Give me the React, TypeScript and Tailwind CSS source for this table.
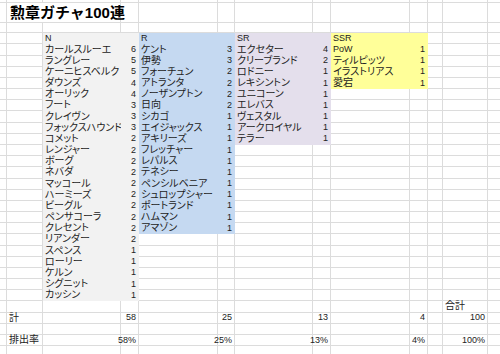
import clsx from "clsx";

// column widths, A..M
const W = [
  "w-[7px]",
  "w-[36px]",
  "w-[78px]",
  "w-[18px]",
  "w-[79px]",
  "w-[17px]",
  "w-[78px]",
  "w-[18px]",
  "w-[79px]",
  "w-[18px]",
  "w-[15px]",
  "w-[45px]",
  "w-[12px]",
];

const FILL = {
  n: "bg-[#f2f2f2] border-[#f2f2f2]",
  r: "bg-[#c5d9f1] border-[#c5d9f1]",
  sr: "bg-[#e4dfec] border-[#e4dfec]",
  ssr: "bg-[#ffff99] border-[#ffff99]",
};

const N: [string, number][] = [
  ["カールスルーエ", 6],
  ["ラングレー", 5],
  ["ケーニヒスベルク", 5],
  ["ダウンズ", 4],
  ["オーリック", 4],
  ["フート", 3],
  ["クレイヴン", 3],
  ["フォックスハウンド", 3],
  ["コメット", 2],
  ["レンジャー", 2],
  ["ボーグ", 2],
  ["ネバダ", 2],
  ["マッコール", 2],
  ["ハーミーズ", 2],
  ["ビーグル", 2],
  ["ペンサコーラ", 2],
  ["クレセント", 2],
  ["リアンダー", 2],
  ["スペンス", 1],
  ["ローリー", 1],
  ["ケルン", 1],
  ["シグニット", 1],
  ["カッシン", 1],
];

const R: [string, number][] = [
  ["ケント", 3],
  ["伊勢", 3],
  ["フォーチュン", 2],
  ["アトランタ", 2],
  ["ノーザンプトン", 2],
  ["日向", 2],
  ["シカゴ", 1],
  ["エイジャックス", 1],
  ["アキリーズ", 1],
  ["フレッチャー", 1],
  ["レパルス", 1],
  ["テネシー", 1],
  ["ペンシルベニア", 1],
  ["シュロップシャー", 1],
  ["ポートランド", 1],
  ["ハムマン", 1],
  ["アマゾン", 1],
];

const SR: [string, number][] = [
  ["エクセター", 4],
  ["クリーブランド", 2],
  ["ロドニー", 1],
  ["レキシントン", 1],
  ["ユニコーン", 1],
  ["エレバス", 1],
  ["ヴェスタル", 1],
  ["アークロイヤル", 1],
  ["テラー", 1],
];

const SSR: [string, number][] = [
  ["PoW", 1],
  ["ティルピッツ", 1],
  ["イラストリアス", 1],
  ["愛宕", 1],
];

type CellData = {
  w: string;
  t?: string | number;
  right?: boolean;
  fill?: string;
  jp?: boolean;
  title?: boolean;
  last?: boolean;
};

type Row = { h: string; cells: CellData[] };

const isJp = (s: string) => /[^\x00-\x7f]/.test(s);

function blank(h = "h-[11.18px]"): Row {
  return { h, cells: W.map((w, i) => ({ w, last: i === W.length - 1 })) };
}

function buildRows(): Row[] {
  const rows: Row[] = [];
  rows.push(blank("h-[2.7px]"));

  const title = blank("h-[20px]");
  title.cells.splice(1, 2, { w: "w-[114px]", t: "勲章ガチャ100連", title: true });
  rows.push(title);

  rows.push(blank("h-[10.6px]"));

  const groups: [string, [string, number][], string][] = [
    ["N", N, FILL.n],
    ["R", R, FILL.r],
    ["SR", SR, FILL.sr],
    ["SSR", SSR, FILL.ssr],
  ];

  for (let i = 0; i <= N.length; i++) {
    const row = blank();
    groups.forEach(([label, list, fill], g) => {
      const col = 2 + g * 2;
      if (i === 0) {
        row.cells[col] = { w: W[col], t: label, fill };
        row.cells[col + 1] = { w: W[col + 1], fill };
      } else if (i <= list.length) {
        const [name, count] = list[i - 1];
        row.cells[col] = { w: W[col], t: name, fill, jp: isJp(name) };
        row.cells[col + 1] = { w: W[col + 1], t: count, fill, right: true };
      }
    });
    rows.push(row);
  }

  const totalHead = blank();
  totalHead.cells[11] = { w: W[11], t: "合計", jp: true };
  rows.push(totalHead);

  const sums = [58, 25, 13, 4];
  const total = blank();
  total.cells[1] = { w: W[1], t: "計", jp: true };
  sums.forEach((s, g) => (total.cells[3 + g * 2] = { w: W[3 + g * 2], t: s, right: true }));
  total.cells[11] = { w: W[11], t: 100, right: true };
  rows.push(total);

  rows.push(blank());

  const rate = blank();
  rate.cells[1] = { w: W[1], t: "排出率", jp: true };
  sums.forEach((s, g) => (rate.cells[3 + g * 2] = { w: W[3 + g * 2], t: `${s}%`, right: true }));
  rate.cells[11] = { w: W[11], t: "100%", right: true };
  rows.push(rate);

  rows.push(blank());
  return rows;
}

function Cell({ c }: { c: CellData }) {
  return (
    <div
      className={clsx(
        "flex h-full shrink-0 items-center whitespace-nowrap border-b",
        !c.last && "border-r",
        c.w,
        c.fill ?? "border-[#dcdcdc]",
        c.right ? "justify-end pr-[2px]" : "pl-[2px]",
        c.title
          ? "pl-[3px] text-[15px] font-bold text-black"
          : c.jp
          ? "text-[10px] [font-feature-settings:'palt']"
          : "text-[9px]"
      )}
    >
      {c.t}
    </div>
  );
}

export default function App() {
  const rows = buildRows();
  return (
    <div
      className="h-[354px] w-[500px] overflow-hidden bg-white leading-none text-[#222]"
      style={{ fontFamily: '"Liberation Sans", "Noto Sans CJK JP", sans-serif' }}
    >
      {rows.map((row, i) => (
        <div key={i} className={clsx("flex", row.h)}>
          {row.cells.map((c, j) => (
            <Cell key={j} c={c} />
          ))}
        </div>
      ))}
    </div>
  );
}
